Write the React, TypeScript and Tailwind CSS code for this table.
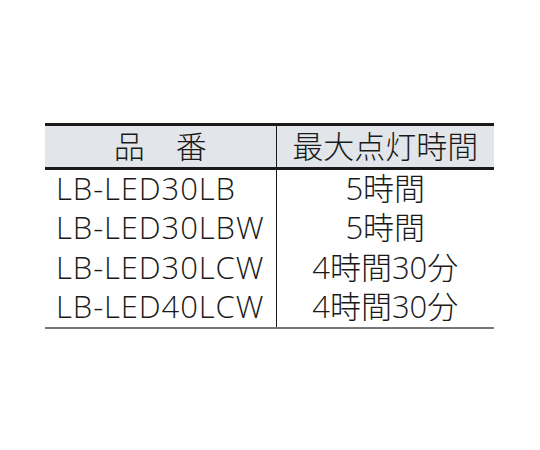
const rows = [
  { code: 'LB-LED30LB', time: '5時間' },
  { code: 'LB-LED30LBW', time: '5時間' },
  { code: 'LB-LED30LCW', time: '4時間30分' },
  { code: 'LB-LED40LCW', time: '4時間30分' },
];

export default function App() {
  return (
    <div className="h-[450px] w-[540px] bg-white pt-[123px] pl-[45px] text-[#1a1a1a] [font-family:'Open_Sans','Noto_Sans_CJK_JP',sans-serif]">
      <table className="w-[449px] border-collapse text-[31px] font-light leading-[36px]">
        <thead>
          <tr className="h-[44px] border-t-[3px] border-b-[3px] border-[#1a1a1a] bg-[#e2e6ea]">
            <th className="w-[231px] border-r border-[#1a1a1a] p-0 pb-[2px] text-center font-light">品　番</th>
            <th className="p-0 pb-[2px] text-center font-light">最大点灯時間</th>
          </tr>
        </thead>
        <tbody className="border-b-2 border-[#777]">
          {rows.map((r) => (
            <tr key={r.code} className="h-[39.5px]">
              <td className="border-r border-[#1a1a1a] p-0 pb-[3px] pl-[11px] text-left tracking-[0.9px]">{r.code}</td>
              <td className="p-0 pb-[3px] text-center">{r.time}</td>
            </tr>
          ))}
        </tbody>
      </table>
    </div>
  );
}
